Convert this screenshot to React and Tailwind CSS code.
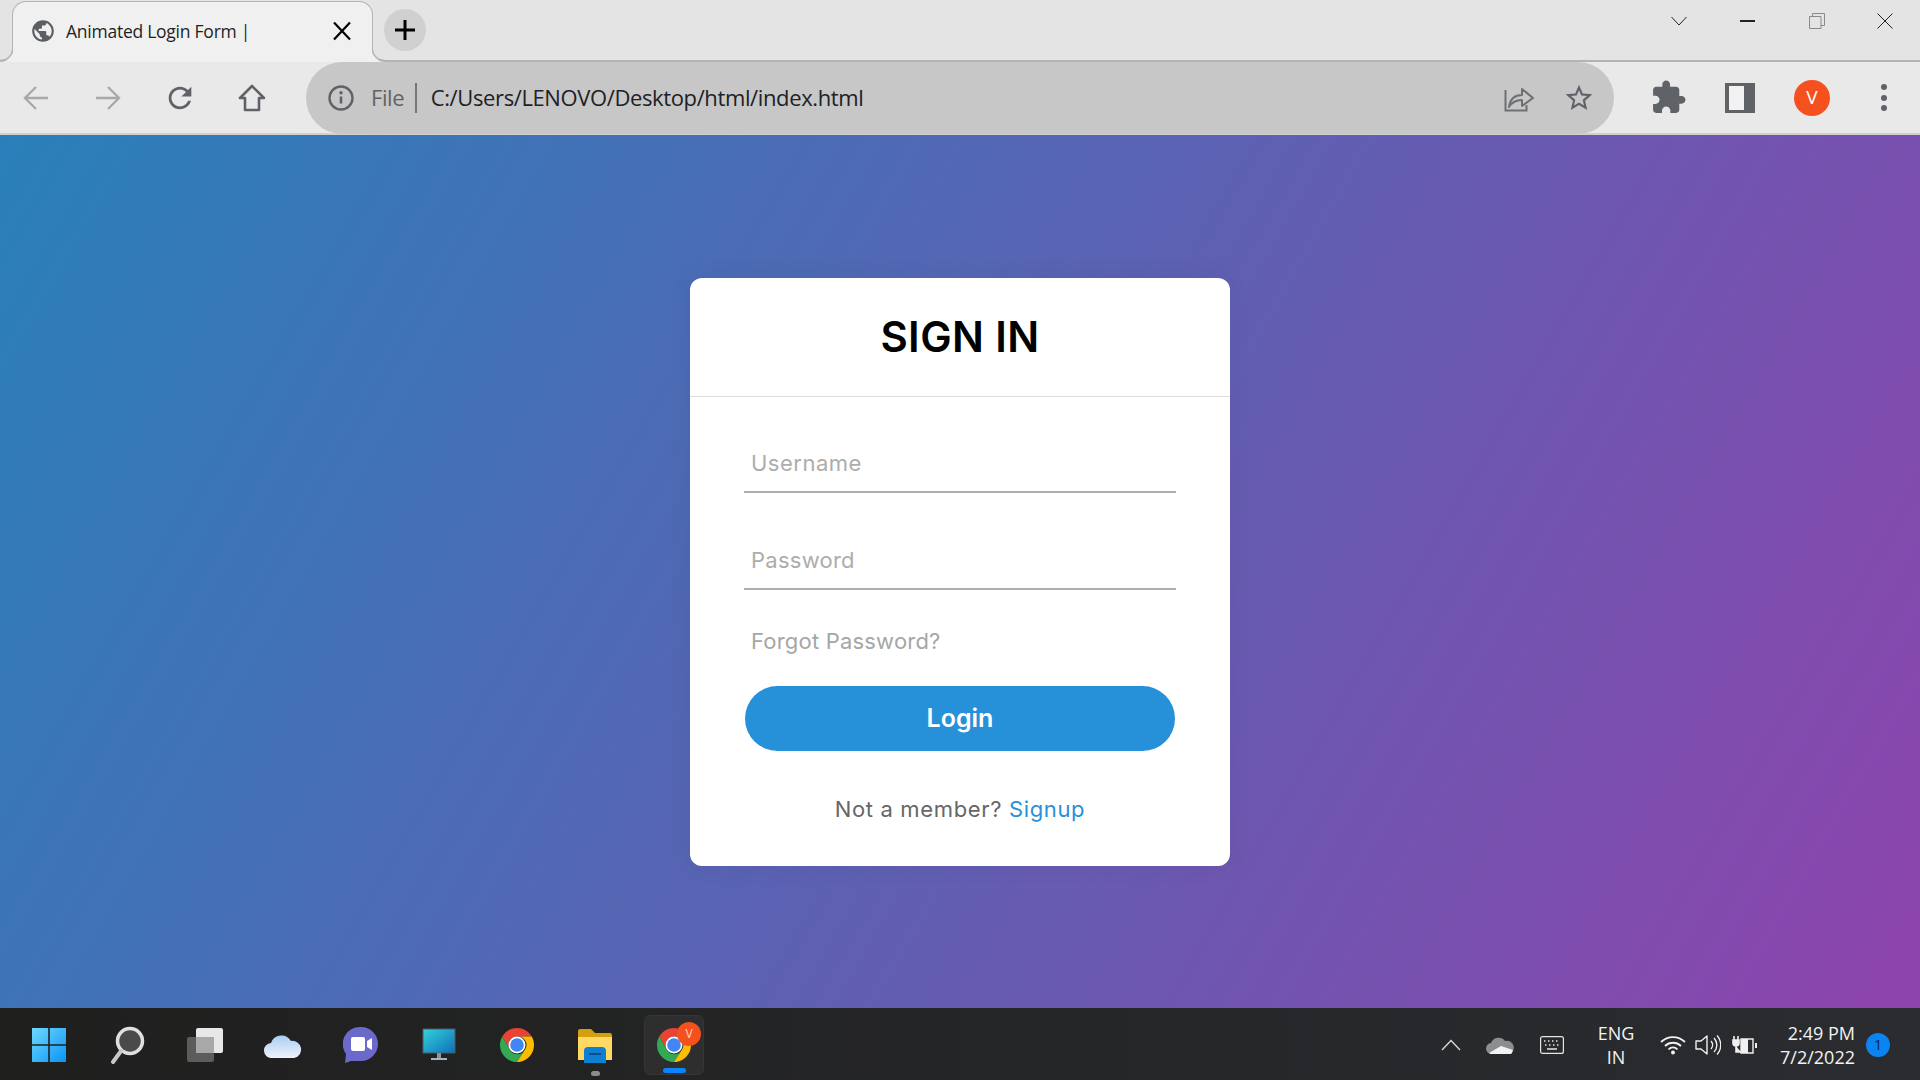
const Chrome = ({ size = 36 }) => (
  <svg width={size} height={size} viewBox="4 4 40 40">
    <path fill="#ea4335" d="M6.68 14A20 20 0 0 1 41.32 14H24A10 10 0 0 0 15.34 29Z" />
    <path fill="#34a853" d="M6.68 14L15.34 29A10 10 0 0 0 33.66 29L24 44A20 20 0 0 1 6.68 14Z" />
    <path fill="#fbbc04" d="M41.32 14H24A10 10 0 0 1 33.66 29L24 44A20 20 0 0 0 41.32 14Z" />
    <circle cx="24" cy="24" r="10" fill="#fff" />
    <circle cx="24" cy="24" r="8" fill="#4285f4" />
  </svg>
);

const MI = ({ d, size = 24, color = "#5f6368" }) => (
  <svg width={size} height={size} viewBox="0 0 24 24" fill={color}><path d={d} /></svg>
);

function TabStrip() {
  return (
    <div className="flex h-[62px] border-b-2 border-[#b4b4b4] bg-[#e4e4e4]">
      <div className="relative ml-[12px] mt-px flex h-[61px] w-[361px] items-center rounded-t-[14px] border border-b-0 border-[#b4b4b4] bg-[#f0f0f0] pl-[17px] pb-[2px]">
        <svg className="absolute -left-[13px] bottom-0" width="13" height="12" viewBox="0 0 13 12"><path d="M13 0v12H0c7 0 12-4 13-12z" fill="#f0f0f0" /><path d="M12.5 0C12 6 7 10.500 0 10.500" fill="none" stroke="#b4b4b4" strokeWidth="1.500" /></svg>
        <svg className="absolute -right-[13px] bottom-0" width="13" height="12" viewBox="0 0 13 12"><path d="M0 0v12h13C6 12 1 8 0 0z" fill="#f0f0f0" /><path d="M.5 0C1 6 6 10.500 13 10.500" fill="none" stroke="#b4b4b4" strokeWidth="1.500" /></svg>
        <MI size={26} color="#5b5e63" d="M12 2C6.48 2 2 6.48 2 12s4.480 10 10 10 10-4.480 10-10S17.520 2 12 2zm-1 17.930c-3.950-.49-7-3.850-7-7.930 0-.62.08-1.210.21-1.790L9 15v1c0 1.100.9 2 2 2v1.930zm6.900-2.540c-.26-.81-1-1.390-1.900-1.390h-1v-3c0-.55-.45-1-1-1H8v-2h2c.55 0 1-.45 1-1V7h2c1.100 0 2-.9 2-2v-.41c2.930 1.190 5 4.060 5 7.410 0 2.080-.8 3.970-2.100 5.390z" />
        <span className="ml-[10px] whitespace-nowrap font-['Open_Sans',sans-serif] text-[17.500px] tracking-[-0.25px] text-[#1f1f1f]">Animated Login Form |</span>
        <svg className="ml-auto mr-[20px]" width="20" height="20" viewBox="0 0 20 20"><path d="M2 1.500 18 18.500M18 1.500 2 18.500" stroke="#000" strokeWidth="2.200" fill="none" /></svg>
      </div>
      <div className="ml-[11px] mt-[9px] flex h-[42px] w-[42px] items-center justify-center rounded-full bg-[#d0d0d0]">
        <svg width="22" height="22" viewBox="0 0 22 22"><path d="M11 1v20M1 11h20" stroke="#000" strokeWidth="3" fill="none" /></svg>
      </div>
      <div className="ml-auto mr-px flex h-[42px]">
        <div className="flex w-[68px] -translate-x-[2px] items-center justify-center"><svg width="16" height="10" viewBox="0 0 16 10"><path d="M.5 1 8 9 15.500 1" stroke="#222" fill="none" /></svg></div>
        <div className="flex w-[68px] -translate-x-[2px] items-center justify-center"><div className="h-[1.500px] w-[15px] bg-[#222]" /></div>
        <div className="flex w-[68px] items-center justify-center"><svg width="16" height="16" viewBox="0 0 16 16"><path d="M.5 3.500h11.500v12H.5zM3.500 3.500V.5h12v12H12" stroke="#8a8a8a" fill="none" /></svg></div>
        <div className="flex w-[68px] items-center justify-center"><svg width="16" height="16" viewBox="0 0 16 16"><path d="M.5.5l15 15M15.500.5l-15 15" stroke="#222" fill="none" /></svg></div>
      </div>
    </div>
  );
}

function Toolbar() {
  const cell = "flex h-full w-[72px] shrink-0 items-center justify-center";
  return (
    <div className="flex h-[73px] items-center border-b-2 border-[#d0d0d0] bg-[#e9e9e9]">
      <div className={cell}><svg width="26" height="26" viewBox="0 0 26 26"><path d="M25 13H2M13 2 2 13l11 11" stroke="#a9a9a9" strokeWidth="2.400" fill="none" /></svg></div>
      <div className={cell}><svg width="26" height="26" viewBox="0 0 26 26"><path d="M1 13h23M13 2l11 11-11 11" stroke="#a9a9a9" strokeWidth="2.400" fill="none" /></svg></div>
      <div className={cell}><MI size={34} d="M17.650 6.350C16.200 4.900 14.210 4 12 4c-4.420 0-7.990 3.580-7.990 8s3.570 8 7.990 8c3.730 0 6.840-2.550 7.730-6h-2.080c-.82 2.330-3.040 4-5.650 4-3.310 0-6-2.690-6-6s2.690-6 6-6c1.660 0 3.140.69 4.220 1.780L13 11h7V4l-2.350 2.350z" /></div>
      <div className={cell}><svg width="28" height="28" viewBox="0 0 28 28"><path d="M14 2 2 14h5v12h14V14h5z" stroke="#5f6368" strokeWidth="2.600" strokeLinejoin="round" fill="none" /></svg></div>
      <div className="ml-[18px] flex h-[72px] w-[1308px] shrink-0 items-center rounded-full bg-[#c7c7c7] pl-[22px] pr-[19px]">
        <svg width="26" height="26" viewBox="0 0 26 26"><circle cx="13" cy="13" r="11.500" stroke="#5f6368" strokeWidth="2.400" fill="none" /><path d="M13 11.500v7" stroke="#5f6368" strokeWidth="2.600" /><circle cx="13" cy="7.800" r="1.700" fill="#5f6368" /></svg>
        <span className="ml-[17px] pb-[2px] font-['Open_Sans',sans-serif] text-[22px] leading-none tracking-[-0.4px] text-[#5f6368]">File</span>
        <div className="ml-[11px] h-[30px] w-[1.500px] bg-[#777]" />
        <span className="ml-[14px] whitespace-nowrap pb-[2px] font-['Open_Sans',sans-serif] text-[22px] leading-none tracking-[-0.38px] text-[#202124]">C:/Users/LENOVO/Desktop/html/index.html</span>
        <svg className="ml-auto -translate-y-px" width="30" height="30" viewBox="0 0 30 30"><path d="M1.500 8v20.500h21V23" stroke="#6e7073" strokeWidth="2" fill="none" /><path d="M5 25c1-7 5-12 13-12V7l11 9-11 8v-6c-6 0-10 2-13 7z" stroke="#6e7073" strokeWidth="2" strokeLinejoin="round" fill="none" /></svg>
        <div className="ml-[29px]"><MI size={32} d="M22 9.240l-7.190-.62L12 2 9.190 8.630 2 9.240l5.460 4.730L5.820 21 12 17.270 18.180 21l-1.630-7.030L22 9.240zM12 15.400l-3.760 2.270 1-4.280-3.320-2.880 4.380-.38L12 6.100l1.710 4.040 4.380.38-3.320 2.880 1 4.280L12 15.400z" /></div>
      </div>
      <div className={`${cell} ml-[18px]`}><MI size={37} d="M20.500 11H19V7c0-1.100-.9-2-2-2h-4V3.500C13 2.120 11.880 1 10.500 1S8 2.120 8 3.500V5H4c-1.100 0-1.990.9-1.990 2v3.800H3.500c1.490 0 2.700 1.210 2.700 2.700s-1.210 2.700-2.700 2.700H2V20c0 1.100.9 2 2 2h3.800v-1.500c0-1.490 1.210-2.700 2.700-2.700 1.490 0 2.700 1.210 2.700 2.700V22H17c1.100 0 2-.9 2-2v-4h1.500c1.380 0 2.500-1.120 2.500-2.500S21.880 11 20.500 11z" /></div>
      <div className={cell}><div className="h-[30px] w-[30px] border-y-[3px] border-l-[4px] border-r-[11px] border-[#5f6368] bg-[#f2f2f2]" /></div>
      <div className={cell}><div className="flex h-[36px] w-[36px] items-center justify-center rounded-full bg-[#f4511e] font-['Open_Sans',sans-serif] text-[19px] text-white">V</div></div>
      <div className={cell}>
        <div className="flex flex-col gap-[4.500px]">
          <div className="h-[6px] w-[6px] rounded-full bg-[#5f6368]" />
          <div className="h-[6px] w-[6px] rounded-full bg-[#5f6368]" />
          <div className="h-[6px] w-[6px] rounded-full bg-[#5f6368]" />
        </div>
      </div>
    </div>
  );
}

function LoginCard() {
  const inputCls = "block h-[46px] w-full border-b-2 border-[#adadad] bg-transparent pb-[12px] pl-[7px] text-[22px] outline-none placeholder:text-[#adadad]";
  return (
    <div className="w-[540px] rounded-[12px] bg-white font-['Inter',sans-serif] shadow-[0_0_24px_rgba(0,0,0,0.06)]">
      <div className="flex h-[119px] items-center justify-center border-b border-[#dddddd]">
        <h1 className="text-[42px] font-semibold tracking-[0.4px] text-black">SIGN IN</h1>
      </div>
      <form className="px-[54px] pb-[42px] pt-[50px]">
        <input className={`${inputCls} tracking-[0.5px]`} placeholder="Username" />
        <input className={`${inputCls} mt-[51px] tracking-[0.25px]`} placeholder="Password" />
        <div className="mt-[36px] pl-[7px] text-[22px] leading-[30px] tracking-[0.2px] text-[#a6a6a6]">Forgot Password?</div>
        <button type="button" className="mx-px mt-[30px] block h-[65px] w-[430px] rounded-full bg-[#2691d9] pt-[2px] text-[25px] font-semibold text-white">Login</button>
        <div className="mt-[43px] text-center text-[22px] leading-[30px] tracking-[0.65px] text-[#666666]">
          Not a member? <span className="text-[#2691d9]">Signup</span>
        </div>
      </form>
    </div>
  );
}

function Taskbar() {
  const cell = "flex h-[60px] w-[78px] shrink-0 items-center justify-center";
  return (
    <div className="flex h-[72px] items-center bg-linear-to-r from-[#1f1f1e] to-[#2a2c30] pl-[10px] pt-px font-['Open_Sans',sans-serif] text-white">
      <div className={cell}>
        <svg width="36" height="36" viewBox="0 0 36 36">
          <defs><linearGradient id="w" x1="0" y1="0" x2="1" y2="1"><stop offset="0" stopColor="#6fd8ff" /><stop offset="1" stopColor="#0a94f5" /></linearGradient></defs>
          <path fill="url(#w)" d="M1 1h16.200v16.200H1zM18.800 1H35v16.200H18.800zM1 18.800h16.200V35H1zM18.800 18.800H35V35H18.800z" />
        </svg>
      </div>
      <div className={cell}>
        <svg width="36" height="38" viewBox="0 0 36 38"><circle cx="21" cy="15" r="12.500" fill="#4a4a4a" stroke="#e0e0e0" strokeWidth="3.500" /><path d="M12 25 4 36" stroke="#c8c8c8" strokeWidth="4" strokeLinecap="round" /></svg>
      </div>
      <div className={cell}>
        <svg width="38" height="36" viewBox="0 0 38 36"><rect x="1" y="10" width="27" height="25" rx="2" fill="#5c5c5c" /><rect x="10" y="1" width="27" height="25" rx="2" fill="#e8e8e8" /><rect x="10" y="10" width="18" height="16" fill="#a8a8a8" /></svg>
      </div>
      <div className={cell}>
        <svg width="38" height="26" viewBox="0 0 38 26"><defs><linearGradient id="c" x1="0" y1="0" x2="0" y2="1"><stop offset="0" stopColor="#a9cdf3" /><stop offset="1" stopColor="#eef3fa" /></linearGradient></defs><path fill="url(#c)" d="M8 26a7.500 7.500 0 0 1-1-15A11 11 0 0 1 27 9a8.500 8.500 0 0 1 3 17z" /></svg>
      </div>
      <div className={cell}>
        <svg width="36" height="38" viewBox="0 0 36 38"><path fill="#6b69c9" d="M18 1a17 17 0 0 1 0 34H8l-6 2 1-9A17 17 0 0 1 18 1z" /><rect x="8" y="11" width="14" height="14" rx="2" fill="#fff" /><path d="M24 15l5-3v12l-5-3z" fill="#fff" /></svg>
      </div>
      <div className={cell}>
        <svg width="34" height="34" viewBox="0 0 34 34"><defs><linearGradient id="m" x1="0" y1="0" x2="1" y2="1"><stop offset="0" stopColor="#35d2dc" /><stop offset="1" stopColor="#0d6fb8" /></linearGradient></defs><rect x="1" y="1" width="32" height="24" fill="url(#m)" stroke="#4a5a62" /><path d="M15 25h4v5h-4z" fill="#8a959c" /><path d="M9 30h16v2H9z" fill="#a9b3b9" /></svg>
      </div>
      <div className={cell}><Chrome size={34} /></div>
      <div className={`${cell} relative`}>
        <svg width="36" height="36" viewBox="0 0 36 36"><path d="M1 4a2 2 0 0 1 2-2h11l4 4h15a2 2 0 0 1 2 2v25H1z" fill="#d69e0e" /><path d="M1 10h34v23H1z" fill="#ffd964" /><path d="M7 24a4 4 0 0 1 4-4h14a4 4 0 0 1 4 4v12H7z" fill="#0f7fd1" /><path d="M12 26h12v2H12z" fill="#0a4f8c" /></svg>
        <div className="absolute bottom-[-1px] left-[35px] h-[5px] w-[9px] rounded-full bg-[#8c8c8c]" />
      </div>
      <div className="relative ml-[10px] flex h-[60px] w-[60px] shrink-0 items-center justify-center rounded-[6px] border border-[#353535] bg-[#2e2e2e]">
        <Chrome size={34} />
        <div className="absolute left-[32px] top-[6px] flex h-[24px] w-[24px] items-center justify-center rounded-full bg-[#f4511e] text-[12px] text-[#ffd9c8]">V</div>
        <div className="absolute bottom-[1px] left-[18px] h-[5px] w-[23px] rounded-full bg-[#0a84ff]" />
      </div>
      <div className="ml-auto flex items-center pr-[30px]">
        <svg width="20" height="12" viewBox="0 0 20 12"><path d="M1 11l9-9.500 9 9.500" stroke="#dcdcdc" strokeWidth="1.300" fill="none" /></svg>
        <svg className="ml-[25px]" width="28" height="18" viewBox="0 0 28 18"><path d="M6 18a5.500 5.500 0 0 1-1-11A8 8 0 0 1 19 5a6.500 6.500 0 0 1 4 13z" fill="#8b8d90" /><path d="M3 17l12-7 12 4-1 3a3 3 0 0 1-3 1H6a4 4 0 0 1-3-1z" fill="#f2f2f2" /></svg>
        <svg className="ml-[26px]" width="24" height="18" viewBox="0 0 24 18"><rect x=".6" y=".6" width="22.800" height="16.800" rx="2" stroke="#e6e6e6" strokeWidth="1.200" fill="none" /><path d="M4 5h1.500M8 5h1.500M12 5h1.500M16 5h1.500M5 9h1.500M9 9h1.500M13 9h1.500M17 9h1.500M7 13h10" stroke="#e6e6e6" strokeWidth="1.300" /></svg>
        <div className="ml-[27px] flex w-[50px] flex-col items-center text-[18px] leading-[24px] text-[#f2f2f2]"><span>ENG</span><span>IN</span></div>
        <svg className="ml-[19px]" width="26" height="20" viewBox="0 0 26 20"><path d="M1 7a17 17 0 0 1 24 0M5 11a11.500 11.500 0 0 1 16 0M8.500 14.500a6 6 0 0 1 9 0" stroke="#f0f0f0" strokeWidth="1.800" fill="none" /><circle cx="13" cy="17.500" r="2" fill="#f0f0f0" /></svg>
        <svg className="ml-[9px]" width="26" height="22" viewBox="0 0 26 22"><path d="M1 7h5l6-5v18l-6-5H1z" stroke="#f0f0f0" strokeWidth="1.400" fill="none" strokeLinejoin="round" /><path d="M16 7a6 6 0 0 1 0 8M19 4a10 10 0 0 1 0 14M22 1.500a14 14 0 0 1 0 19" stroke="#f0f0f0" strokeWidth="1.400" fill="none" /></svg>
        <svg className="ml-[11px]" width="26" height="20" viewBox="0 0 26 20"><path d="M9 4h12v14H9z" stroke="#f0f0f0" strokeWidth="1.400" fill="none" /><path d="M9 4h7v14H9zM23 8h2v5h-2z" fill="#f0f0f0" /><path d="M2 1v4M6 1v4M1 5h6v3a3 3 0 0 1-6 0zM4 11v6h5" stroke="#f0f0f0" strokeWidth="1.600" fill="#f0f0f0" /></svg>
        <div className="ml-[9px] flex w-[88px] flex-col items-end text-[18px] leading-[24px] text-[#f2f2f2]"><span className="whitespace-nowrap">2:49 PM</span><span>7/2/2022</span></div>
        <div className="ml-[11px] flex h-[24px] w-[24px] items-center justify-center rounded-full bg-[#0a84f0] text-[15px] text-[#0b2a4a]">1</div>
      </div>
    </div>
  );
}

export default function App() {
  return (
    <div className="flex h-[1080px] w-[1920px] flex-col overflow-hidden">
      <TabStrip />
      <Toolbar />
      <main className="flex flex-1 items-center justify-center bg-[linear-gradient(120deg,#2980b9,#8e44ad)]">
        <LoginCard />
      </main>
      <Taskbar />
    </div>
  );
}
